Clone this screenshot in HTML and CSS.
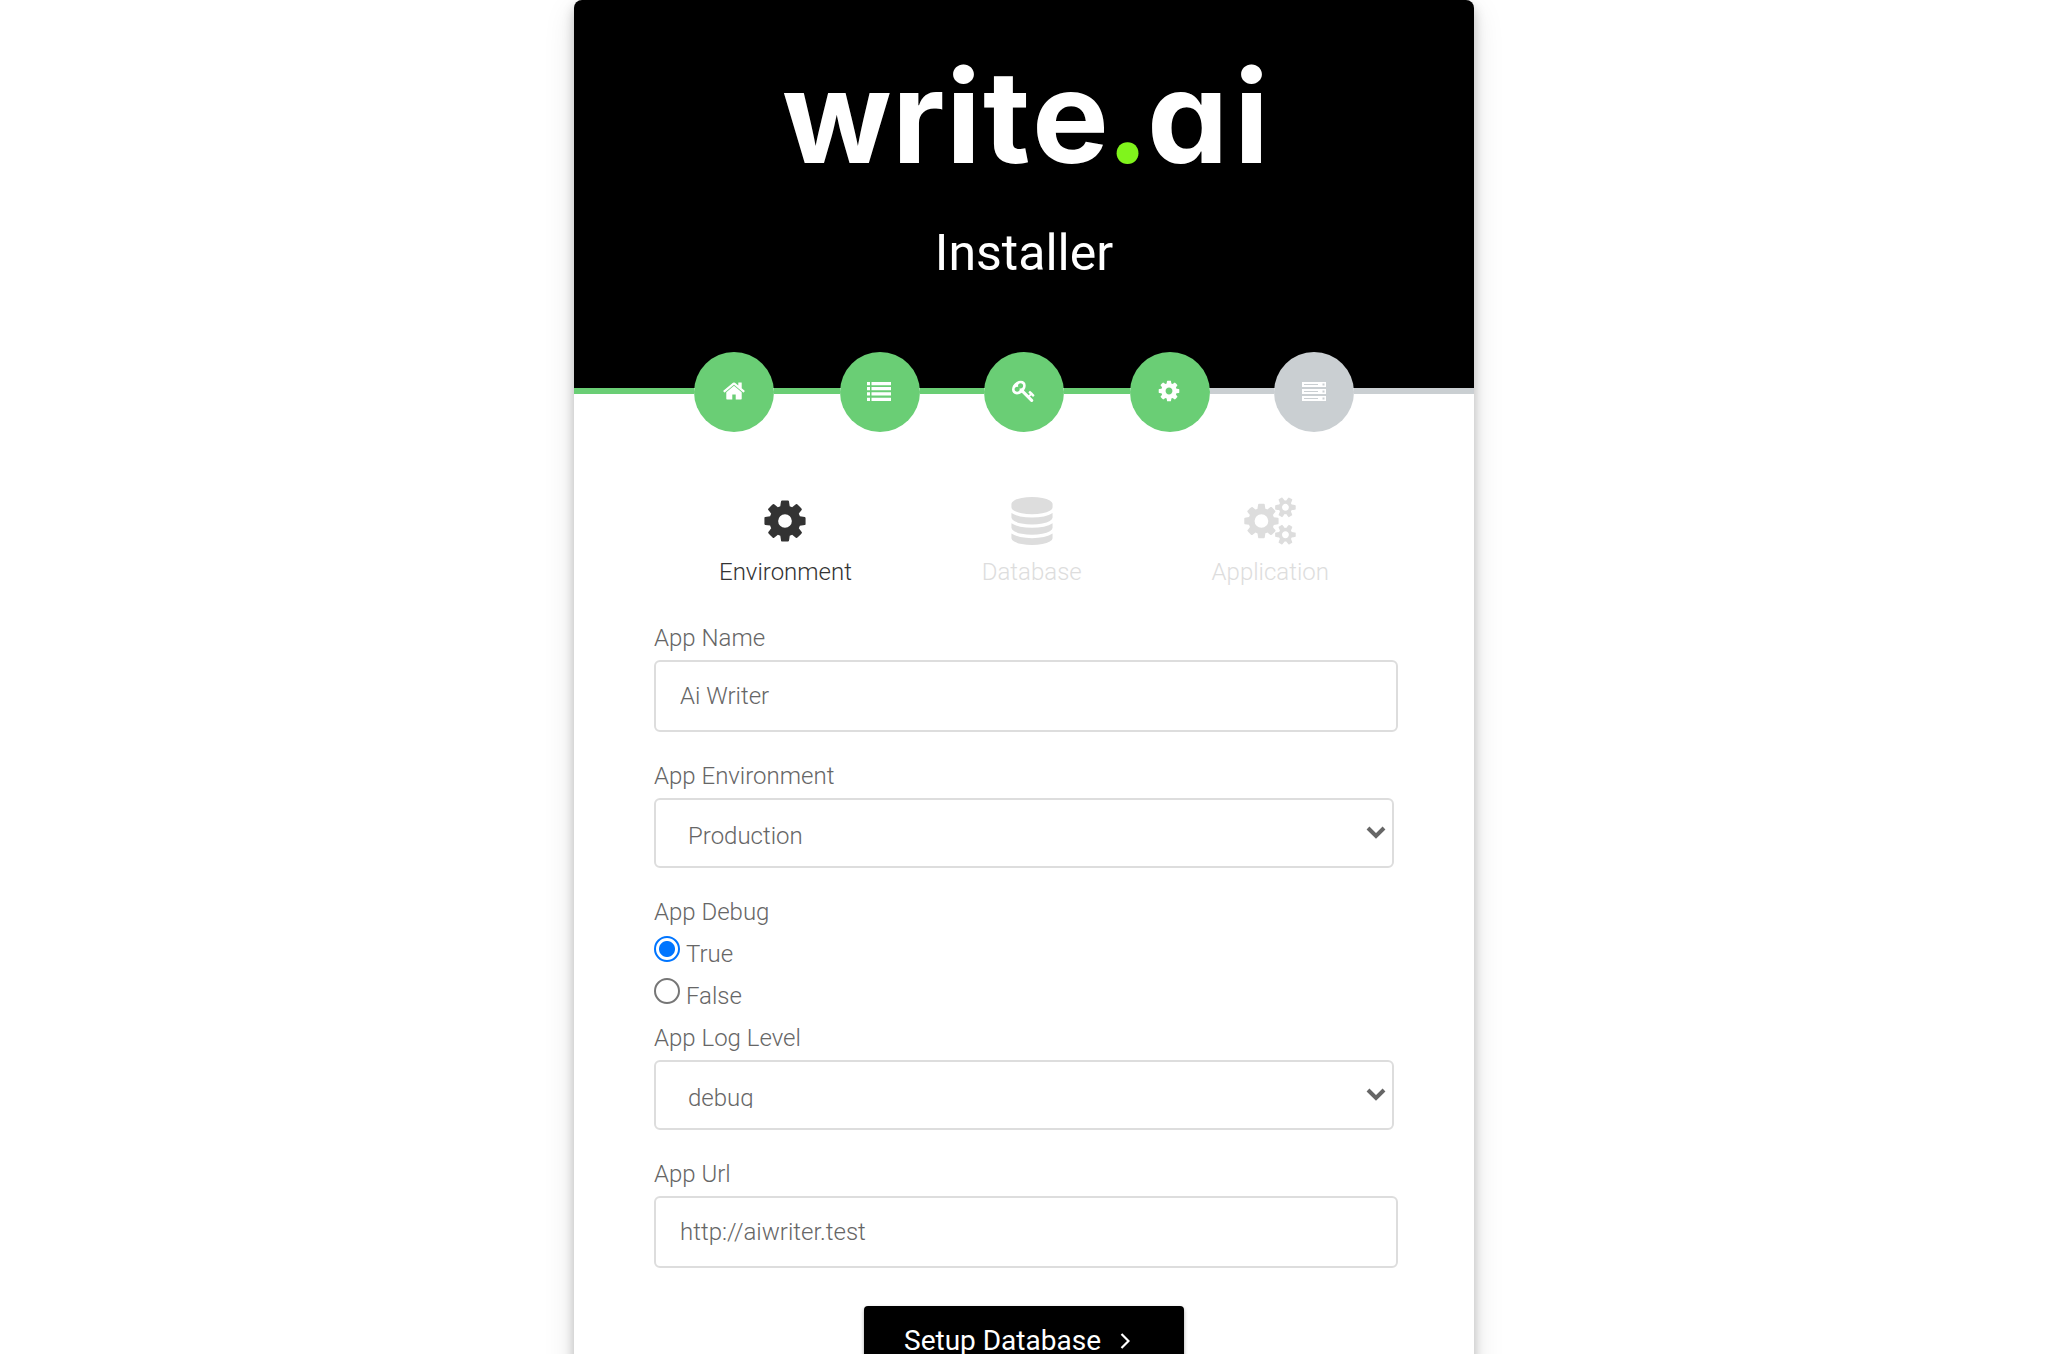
FILE: index.html
```html
<!DOCTYPE html>
<html lang="en">
<head>
<meta charset="utf-8">
<title>Installer</title>
<link rel="stylesheet" href="styles.css">
</head>
<body>
<svg class="defs" width="0" height="0">
  <symbol id="home" viewBox="0 0 1792 1792"><path d="M1472 992v480q0 26-19 45t-45 19h-384v-384h-256v384h-384q-26 0-45-19t-19-45v-480q0-1 .5-3t.5-3l575-474 575 474q1 2 1 6zm223-69l-62 74q-8 9-21 11h-3q-13 0-21-7l-692-577-692 577q-12 8-24 7-13-2-21-11l-62-74q-8-10-7-23.5t11-21.5l719-599q32-26 76-26t76 26l244 204v-195q0-14 9-23t23-9h192q14 0 23 9t9 23v408l219 182q10 8 11 21.5t-7 23.5z"/></symbol>
  <symbol id="cog" viewBox="0 0 1792 1792"><path d="M1152 896q0-106-75-181t-181-75-181 75-75 181 75 181 181 75 181-75 75-181zm512-109v222q0 12-8 23t-20 13l-185 28q-19 54-39 91 35 50 107 138 10 12 10 25t-9 23q-27 37-99 108t-94 71q-12 0-26-9l-138-108q-44 23-91 38-16 136-29 186-7 28-36 28h-222q-14 0-24.5-8.5t-11.5-21.5l-28-184q-49-16-90-37l-141 107q-10 9-25 9-14 0-25-11-126-114-165-168-7-10-7-23 0-12 8-23 15-21 51-66.5t54-70.5q-27-50-41-99l-183-27q-13-2-21-12.5t-8-23.5v-222q0-12 8-23t19-13l186-28q14-46 39-92-40-57-107-138-10-12-10-24 0-10 9-23 26-36 98.5-107.5t94.5-71.5q13 0 26 10l138 107q44-23 91-38 16-136 29-186 7-28 36-28h222q14 0 24.5 8.5t11.5 21.5l28 184q49 16 90 37l142-107q9-9 24-9 13 0 25 10 129 119 165 170 7 8 7 22 0 12-8 23-15 21-51 66.5t-54 70.5q26 50 41 98l183 28q13 2 21 12.5t8 23.5z"/></symbol>
  <symbol id="key" viewBox="0 0 1792 1792"><path d="M832 512q0-80-56-136t-136-56-136 56-56 136q0 42 19 83-41-19-83-19-80 0-136 56t-56 136 56 136 136 56 136-56 56-136q0-42-19-83 41 19 83 19 80 0 136-56t56-136zm851 704q0 17-49 66t-66 49q-9 0-28.5-16t-36.5-33-38.5-40-24.5-26l-96 96 220 220q28 28 28 68 0 42-39 81t-81 39q-40 0-68-28l-671-671q-176 131-365 131-163 0-265.5-102.5t-102.5-265.5q0-160 95-313t248-248 313-95q163 0 265.5 102.5t102.5 265.5q0 189-131 365l355 355 96-96q-3-3-26-24.5t-40-38.5-33-36.5-16-28.5q0-17 49-66t66-49q13 0 23 10 6 6 46 44.5t82 79.5 86.5 86 73 78 28.5 41z"/></symbol>
  <symbol id="list" viewBox="0 0 24 24"><path d="M0 3h3v3.300H0zM4.500 3H24v3.300H4.500zM0 8h3v3.300H0zM4.500 8H24v3.300H4.500zM0 13.200h3v3.300H0zM4.500 13.200H24v3.300H4.500zM0 18.700h3V22H0zM4.500 18.700H24V22H4.500z"/></symbol>
  <symbol id="server" viewBox="0 0 24 24"><path fill-rule="evenodd" d="M0 3h24v5H0zM2 5v1h14V5zM20.500 4.500v2h2v-2zM0 10h24v5H0zM2 12v1h14v-1zM20.500 11.500v2h2v-2zM0 17h24v5H0zM2 19v1h14v-1zM20.500 18.500v2h2v-2z"/></symbol>
  <symbol id="database" viewBox="0 0 1792 1792"><path d="M896 768q237 0 443-43t325-127v170q0 69-103 128t-280 93.500-385 34.500-385-34.500-280-93.500-103-128v-170q119 84 325 127t443 43zm0 768q237 0 443-43t325-127v170q0 69-103 128t-280 93.500-385 34.500-385-34.500-280-93.500-103-128v-170q119 84 325 127t443 43zm0-384q237 0 443-43t325-127v170q0 69-103 128t-280 93.500-385 34.500-385-34.500-280-93.500-103-128v-170q119 84 325 127t443 43zm0-1152q208 0 385 34.500t280 93.500 103 128v128q0 69-103 128t-280 93.500-385 34.500-385-34.500-280-93.500-103-128v-128q0-69 103-128t280-93.500 385-34.500z"/></symbol>
  <symbol id="cogs" viewBox="0 0 1920 1792"><path d="M896 896q0-106-75-181t-181-75-181 75-75 181 75 181 181 75 181-75 75-181zm768 512q0-52-38-90t-90-38-90 38-38 90q0 53 37.500 90.500t90.500 37.500 90.500-37.500 37.500-90.500zm0-1024q0-52-38-90t-90-38-90 38-38 90q0 53 37.500 90.500t90.500 37.500 90.500-37.500 37.500-90.500zm-384 421v185q0 10-7 19.500t-16 10.500l-155 24q-11 35-32 76 34 48 90 115 7 11 7 20 0 12-7 19-23 30-82.500 89.500t-78.500 59.500q-11 0-21-7l-115-90q-37 19-77 31-11 108-23 155-7 24-30 24h-186q-11 0-20-7.500t-10-17.500l-23-153q-34-10-75-31l-118 89q-7 7-20 7-11 0-21-8-144-133-144-160 0-9 7-19 10-14 41-53t47-61q-23-44-35-82l-152-24q-10-1-17-9.500t-7-19.500v-185q0-10 7-19.500t16-10.500l155-24q11-35 32-76-34-48-90-115-7-11-7-20 0-12 7-20 22-30 82-89t79-59q11 0 21 7l115 90q34-18 77-32 11-108 23-154 7-24 30-24h186q11 0 20 7.500t10 17.500l23 153q34 10 75 31l118-89q8-7 20-7 11 0 21 8 144 133 144 160 0 8-7 19-12 16-42 54t-45 60q23 48 34 82l152 23q10 2 17 10.500t7 19.500zm640 533v140q0 16-149 31-12 27-30 52 51 113 51 138 0 4-4 7-122 71-124 71-8 0-46-47t-52-68q-20 2-30 2t-30-2q-14 21-52 68t-46 47q-2 0-124-71-4-3-4-7 0-25 51-138-18-25-30-52-149-15-149-31v-140q0-16 149-31 13-29 30-52-51-113-51-138 0-4 4-7 4-2 35-20t59-34 30-16q8 0 46 46.500t52 67.500q20-2 30-2t30 2q51-71 92-112l6-2q4 0 124 70 4 3 4 7 0 25-51 138 17 23 30 52 149 15 149 31zm0-1024v140q0 16-149 31-12 27-30 52 51 113 51 138 0 4-4 7-122 71-124 71-8 0-46-47t-52-68q-20 2-30 2t-30-2q-14 21-52 68t-46 47q-2 0-124-71-4-3-4-7 0-25 51-138-18-25-30-52-149-15-149-31v-140q0-16 149-31 13-29 30-52-51-113-51-138 0-4 4-7 4-2 35-20t59-34 30-16q8 0 46 46.500t52 67.500q20-2 30-2t30 2q51-71 92-112l6-2q4 0 124 70 4 3 4 7 0 25-51 138 17 23 30 52 149 15 149 31z"/></symbol>
</svg>
<main class="card">
  <header class="header">
    <svg class="logo" width="500" height="190" viewBox="774 20 500 190"><text class="logo-text" y="163" x="782 892 946 983 1032 1106 1147 1234">write<tspan class="logo-dot">.</tspan>ai</text></svg>
    <h1 class="title">Installer</h1>
  </header>
  <ol class="steps">
    <li class="rail rail-edge done"></li>
    <li class="step done"><svg class="glyph"><use href="#home"/></svg></li>
    <li class="rail rail-long done"></li>
    <li class="step done"><svg class="glyph glyph-left"><use href="#list"/></svg></li>
    <li class="rail done"></li>
    <li class="step done"><svg class="glyph"><use href="#key"/></svg></li>
    <li class="rail rail-long done"></li>
    <li class="step done"><svg class="glyph glyph-left"><use href="#cog"/></svg></li>
    <li class="rail"></li>
    <li class="step"><svg class="glyph"><use href="#server"/></svg></li>
    <li class="rail rail-edge"></li>
  </ol>
  <section class="content">
    <nav class="tabs">
      <a class="tab active"><svg class="tab-icon"><use href="#cog"/></svg><span>Environment</span></a>
      <a class="tab"><svg class="tab-icon"><use href="#database"/></svg><span>Database</span></a>
      <a class="tab"><svg class="tab-icon wide"><use href="#cogs"/></svg><span>Application</span></a>
    </nav>
    <form class="form">
      <label class="label" for="name">App Name</label>
      <input class="input" id="name" type="text" placeholder="Ai Writer">
      <label class="label" for="env">App Environment</label>
      <div class="select" id="env"><span class="value">Production</span><svg class="chevron" viewBox="0 0 20 14"><path d="M2 2l8 8 8-8"/></svg></div>
      <span class="label">App Debug</span>
      <label class="option"><span class="radio checked"></span><span class="option-text">True</span></label>
      <label class="option"><span class="radio"></span><span class="option-text">False</span></label>
      <label class="label" for="log">App Log Level</label>
      <div class="select" id="log"><span class="value">debug</span><svg class="chevron" viewBox="0 0 20 14"><path d="M2 2l8 8 8-8"/></svg></div>
      <label class="label" for="url">App Url</label>
      <input class="input" id="url" type="text" placeholder="http://aiwriter.test">
      <button class="button" type="button">Setup Database<svg class="arrow" viewBox="0 0 10 18"><path d="M1.500 2l7 7-7 7"/></svg></button>
    </form>
  </section>
</main>
</body>
</html>
```
FILE: styles.css
```css
* { box-sizing: border-box; }
html { overflow: hidden; }
body {
  margin: 0;
  height: 1354px;
  overflow: hidden;
  display: flex;
  justify-content: center;
  background: #fff;
  font: 300 24px/42px Roboto, sans-serif;
  color: #666;
}
.defs { position: absolute; }
.card {
  width: 900px;
  height: 1480px;
  flex: none;
  border-radius: 8px;
  background: #fff;
  box-shadow: 0 10px 32px rgba(0,0,0,.11), 0 6px 12px rgba(0,0,0,.23);
}
.header {
  height: 388px;
  padding-top: 20px;
  border-radius: 8px 8px 0 0;
  background: #000;
  display: flex;
  flex-direction: column;
  align-items: center;
}
.logo { display: block; flex: none; }
.logo-text { font: 700 129px Inter, sans-serif; font-feature-settings: "cv11"; fill: #fff; }
.logo-dot { fill: #80f41c; }
.title { margin: 12px 0 0; font-size: 50px; line-height: 62px; font-weight: 400; color: #fff; }
.steps {
  list-style: none;
  margin: -36px 0 0;
  padding: 0;
  height: 80px;
  display: flex;
  align-items: center;
}
.rail { flex: 0 0 64px; height: 6px; background: #cacfd2; margin-top: -2px; }
.rail-long { flex-basis: 66px; }
.rail-edge { flex-basis: 120px; }
.rail.done, .step.done { background: #6ace75; }
.step {
  flex: none;
  width: 80px;
  height: 80px;
  border-radius: 50%;
  background: #cacfd2;
  display: flex;
  align-items: center;
  justify-content: center;
  position: relative;
}
.glyph { width: 24px; height: 24px; fill: #fff; margin-bottom: 3px; }
.glyph-left { margin-right: 2px; }
.content { padding: 65px 76px 0 80px; }
.tabs { display: flex; padding: 0 69px 0 65px; justify-content: space-between; }
.tab { display: flex; flex-direction: column; align-items: center; color: #ddd; }
.tab.active { color: #333; }
.tab-icon { width: 48px; height: 48px; fill: currentColor; }
.tab-icon.wide { width: 52px; }
.tab span { line-height: 40px; margin-top: 7px; }
.form { display: flex; flex-direction: column; align-items: flex-start; margin-top: 26px; }
.label { line-height: 40px; height: 42px; }
.input {
  width: 744px;
  height: 72px;
  margin: 0 0 24px;
  padding: 0 24px;
  border: 2px solid #ddd;
  border-radius: 6px;
  font: inherit;
  color: #666;
  background: #fff;
}
.input::placeholder { color: #666; opacity: 1; }
.select {
  width: 740px;
  height: 70px;
  margin-bottom: 24px;
  padding: 22px 6px 0 32px;
  border: 2px solid #ddd;
  border-radius: 6px;
  display: flex;
  justify-content: space-between;
}
.value { height: 24px; line-height: 29px; overflow: hidden; }
.chevron { width: 20px; height: 14px; margin-top: 4px; fill: none; stroke: #666; stroke-width: 4; }
.option { height: 42px; line-height: 40px; display: flex; gap: 6px; }
.radio { width: 26px; height: 26px; margin-top: 2px; border: 2px solid #767676; border-radius: 50%; }
.radio.checked { border-color: #0075ff; background: radial-gradient(circle, #0075ff 7.500px, #fff 8.500px); }
.button {
  align-self: center;
  margin: 14px 4px 0 0;
  width: 320px;
  height: 70px;
  border: 0;
  border-radius: 4px;
  background: #000;
  color: #fff;
  font: 400 28px/70px Roboto, sans-serif;
  display: flex;
  align-items: center;
  padding: 0 40px;
  gap: 19px;
  box-shadow: 0 2px 3px rgba(0,0,0,.12), 0 2px 4px rgba(0,0,0,.24);
}
.arrow { width: 10px; height: 18px; fill: none; stroke: #fff; stroke-width: 2.200; }
```
